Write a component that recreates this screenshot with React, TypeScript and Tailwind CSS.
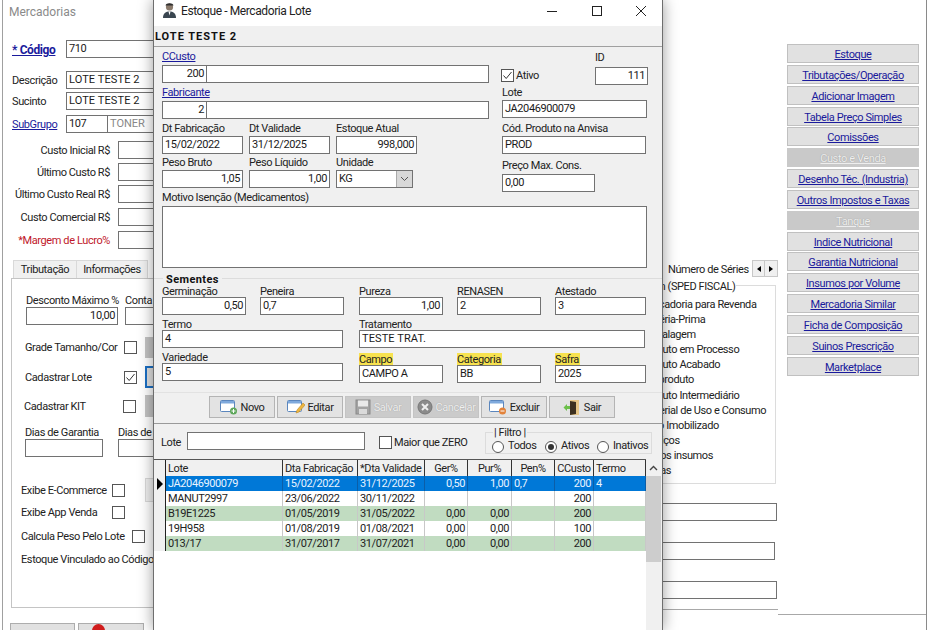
import type { ReactNode } from 'react';

const inputBox = 'h-[18px] border border-[#727272] bg-white px-[2px] leading-[15px] text-[#1a1a1a] overflow-hidden whitespace-nowrap';

function Input({ className = '', right, children }: { className?: string; right?: boolean; children?: ReactNode }) {
  return <div className={`${inputBox} ${right ? 'text-right' : ''} ${className}`}>{children}</div>;
}

function Label({ className = '', children }: { className?: string; children: ReactNode }) {
  return <div className={`h-[14px] leading-[16px] whitespace-nowrap text-[#222] ${className}`}>{children}</div>;
}

function LinkLabel({ className = '', children }: { className?: string; children: ReactNode }) {
  return <div className={`h-[14px] leading-[16px] whitespace-nowrap text-[#1a1a9c] underline ${className}`}>{children}</div>;
}

function Check({ checked, className = '' }: { checked?: boolean; className?: string }) {
  return (
    <div className={`w-[13px] h-[13px] shrink-0 border border-[#555] bg-white flex items-center justify-center ${className}`}>
      {checked && (
        <svg width="11" height="11" viewBox="0 0 11 11" fill="none" stroke="#333" strokeWidth="1">
          <path d="M1.5 5.5 L4.2 8.5 L9.5 2" />
        </svg>
      )}
    </div>
  );
}

function Radio({ checked }: { checked?: boolean }) {
  return (
    <div className="w-[12px] h-[12px] shrink-0 rounded-full border border-[#555] bg-white flex items-center justify-center">
      {checked && <div className="w-[6px] h-[6px] rounded-full bg-[#333]" />}
    </div>
  );
}

function WindowIcon({ badge }: { badge: ReactNode }) {
  return (
    <svg width="18" height="16" viewBox="0 0 18 16">
      <rect x="0.5" y="1.5" width="14" height="11" rx="1" fill="#fff" stroke="#5b86bd" />
      <rect x="1" y="2" width="13" height="2.5" fill="#7fa9dc" />
      {badge}
    </svg>
  );
}

const toolbar = [
  {
    name: 'Novo',
    icon: <WindowIcon badge={<><circle cx="13.5" cy="12" r="3.5" fill="#5da75a" /><path d="M11.5 12h4M13.5 10v4" stroke="#fff" /></>} />,
  },
  {
    name: 'Editar',
    icon: <WindowIcon badge={<><path d="M9 14l1-3 6-7 2 2-6 7z" fill="#eeb640" stroke="#b98a2a" strokeWidth="0.6" /></>} />,
  },
  {
    name: 'Salvar',
    disabled: true,
    icon: (
      <svg width="16" height="16" viewBox="0 0 16 16">
        <rect x="1" y="1" width="14" height="14" fill="#a3a3a3" stroke="#8a8a8a" />
        <rect x="3" y="1.5" width="10" height="6" fill="#e9e9e9" />
        <rect x="4" y="10" width="8" height="5" fill="#dadada" />
      </svg>
    ),
  },
  {
    name: 'Cancelar',
    disabled: true,
    icon: (
      <svg width="16" height="16" viewBox="0 0 16 16">
        <circle cx="8" cy="8" r="7" fill="#8b8b8b" stroke="#777" />
        <path d="M5 5l6 6M11 5l-6 6" stroke="#eee" strokeWidth="2" />
      </svg>
    ),
  },
  {
    name: 'Excluir',
    icon: <WindowIcon badge={<><circle cx="13.5" cy="12" r="3.5" fill="#e2823a" /><path d="M11.5 12h4" stroke="#fff" /></>} />,
  },
  {
    name: 'Sair',
    icon: (
      <svg width="18" height="17" viewBox="0 0 18 17">
        <rect x="7" y="1" width="9" height="15" fill="#e6c689" />
        <path d="M7 2l6 1v12l-6 1z" fill="#3d3020" />
        <path d="M0.5 8.5l3.5-3.5v2h3v3H4v2z" fill="#6cc04a" />
      </svg>
    ),
  },
];

const gridCols = 'grid grid-cols-[117px_75px_67px_43px_44px_43px_39px_52px]';
const headers = ['Lote', 'Dta Fabricação', '*Dta Validade', 'Ger%', 'Pur%', 'Pen%', 'CCusto', 'Termo'];
const centeredHeaders = [3, 4, 5, 6];
const rightCols = [3, 4, 6];
const rows = [
  { cells: ['JA2046900079', '15/02/2022', '31/12/2025', '0,50', '1,00', '0,7', '200', '4'], kind: 'sel' },
  { cells: ['MANUT2997', '23/06/2022', '30/11/2022', '', '', '', '200', ''], kind: 'plain' },
  { cells: ['B19E1225', '01/05/2019', '31/05/2022', '0,00', '0,00', '', '200', ''], kind: 'green' },
  { cells: ['19H958', '01/08/2019', '01/08/2021', '0,00', '0,00', '', '100', ''], kind: 'plain' },
  { cells: ['013/17', '31/07/2017', '31/07/2021', '0,00', '0,00', '', '200', ''], kind: 'green' },
];

const sideButtons = [
  ['Estoque'],
  ['Tributações/Operação'],
  ['Adicionar Imagem'],
  ['Tabela Preço Simples'],
  ['Comissões '],
  ['Custo e Venda', 'off'],
  ['Desenho Téc. (Industria)'],
  ['Outros Impostos e Taxas'],
  ['Tanque', 'off'],
  ['Indice Nutricional'],
  ['Garantia Nutricional'],
  ['Insumos por Volume'],
  ['Mercadoria Similar'],
  ['Ficha de Composição'],
  ['Suinos Prescrição'],
  ['Marketplace'],
];

const spedItems = [
  'Mercadoria para Revenda',
  'Matéria-Prima',
  'Embalagem',
  'Produto em Processo',
  'Produto Acabado',
  'Subproduto',
  'Produto Intermediário',
  'Material de Uso e Consumo',
  'Ativo Imobilizado',
  'Serviços',
  'Outros insumos',
  'Outras',
];

function CostRow({ label, red, top }: { label: string; red?: boolean; top: string }) {
  return (
    <div className={`flex items-center h-[18px] ${top}`}>
      <div className={`w-[107px] shrink-0 pt-[2px] text-right whitespace-nowrap ${red ? 'text-[#c0182a]' : 'text-[#222]'}`}>{label}</div>
      <Input className="ml-[8px] w-[60px] shrink-0" />
    </div>
  );
}

function BackLeft() {
  return (
    <div className="w-[150px] ml-[2px] h-[630px] box-content border-l border-[#a0a0a0] overflow-hidden shrink-0">
      <div className="pt-[5px] pl-[6px] h-[14px] leading-[14px] box-content text-[12px] tracking-[0px] text-[#8a8a8a]">Mercadorias</div>
      <div className="flex items-center h-[18px] mt-[21px] ml-[9px]">
        <div className="w-[54px] shrink-0 pt-[2px] font-bold text-[12px] text-[#1a1a9c] underline whitespace-nowrap">* Código</div>
        <Input className="w-[90px] shrink-0">710</Input>
      </div>
      <div className="flex items-center h-[18px] mt-[13px] ml-[9px]">
        <div className="w-[54px] shrink-0 pt-[2px]">Descrição</div>
        <Input className="w-[90px] shrink-0 tracking-[0.1px]">LOTE TESTE 2</Input>
      </div>
      <div className="flex items-center h-[18px] mt-[3px] ml-[9px]">
        <div className="w-[54px] shrink-0 pt-[2px]">Sucinto</div>
        <Input className="w-[90px] shrink-0 tracking-[0.1px]">LOTE TESTE 2</Input>
      </div>
      <div className="flex items-center h-[18px] mt-[5px] ml-[9px]">
        <div className="w-[54px] shrink-0 pt-[2px] text-[#1a1a9c] underline">SubGrupo</div>
        <Input className="w-[42px] shrink-0">107</Input>
        <Input className="w-[60px] shrink-0 text-[#888] -ml-px tracking-[0px]">TONER</Input>
      </div>
      <CostRow label="Custo Inicial R$" top="mt-[8px]" />
      <CostRow label="Último Custo R$" top="mt-[4px]" />
      <CostRow label="Último Custo Real R$" top="mt-[4px]" />
      <CostRow label="Custo Comercial R$" top="mt-[5px]" />
      <CostRow label="*Margem de Lucro%" red top="mt-[5px]" />
      <div className="flex mt-[11px] ml-[10px] h-[18px]">
        <div className="w-[64px] border border-b-0 border-[#d9d9d9] bg-[#f0f0f0] text-center leading-[18px]">Tributação</div>
        <div className="w-[71px] border border-b-0 border-l-0 border-[#d9d9d9] bg-[#f0f0f0] text-center leading-[18px]">Informações</div>
      </div>
      <div className="ml-[8px] w-[160px] h-[330px] border-l border-t border-b border-[#c4c4c4]">
        <div className="flex mt-[14px] ml-[14px]">
          <Label className="w-[99px] shrink-0">Desconto Máximo %</Label>
          <Label>Conta</Label>
        </div>
        <div className="flex ml-[14px]">
          <Input right className="w-[92px] shrink-0">10,00</Input>
          <Input className="w-[40px] shrink-0 ml-[7px]" />
        </div>
        <div className="h-[22px] mt-[11px] ml-[13px] flex items-center">
          <div className="w-[99px] shrink-0 pt-[2px] whitespace-nowrap">Grade Tamanho/Cor</div>
          <Check />
          <div className="ml-[8px] w-[12px] h-[21px] bg-[#c4c4c4]" />
        </div>
        <div className="h-[22px] mt-[8px] ml-[13px] flex items-center">
          <div className="w-[99px] shrink-0 pt-[2px] whitespace-nowrap">Cadastrar Lote</div>
          <Check checked />
          <div className="ml-[8px] w-[12px] h-[22px] border-2 border-[#1a6fc4] bg-[#e1e1e1]" />
        </div>
        <div className="h-[22px] mt-[7px] ml-[12px] flex items-center">
          <div className="w-[99px] shrink-0 pt-[2px] whitespace-nowrap">Cadastrar KIT</div>
          <Check />
          <div className="ml-[9px] w-[12px] h-[22px] bg-[#c4c4c4]" />
        </div>
        <div className="flex mt-[8px] ml-[13px]">
          <Label className="w-[93px] shrink-0">Dias de Garantia</Label>
          <Label>Dias de</Label>
        </div>
        <div className="flex ml-[13px]">
          <Input className="w-[78px] shrink-0" />
          <Input className="w-[50px] shrink-0 ml-[15px]" />
        </div>
        <div className="h-[24px] mt-[21px] ml-[9px] flex items-center">
          <div className="w-[91px] shrink-0 pt-[2px] whitespace-nowrap">Exibe E-Commerce</div>
          <Check />
          <div className="ml-[20px] w-[20px] h-[24px] border border-[#d9d9d9] bg-[#f0f0f0]" />
        </div>
        <div className="h-[14px] mt-[3px] ml-[9px] flex items-center">
          <div className="w-[91px] shrink-0 pt-[2px] whitespace-nowrap">Exibe App Venda</div>
          <Check />
        </div>
        <div className="h-[14px] mt-[10px] ml-[9px] flex items-center">
          <div className="w-[111px] shrink-0 pt-[2px] whitespace-nowrap">Calcula Peso Pelo Lote</div>
          <Check />
        </div>
        <div className="h-[14px] mt-[9px] ml-[9px] leading-[16px] whitespace-nowrap">Estoque Vinculado ao Código</div>
      </div>
      <div className="flex mt-[15px] ml-[7px] gap-[3px]">
        <div className="w-[65px] h-[20px] shrink-0 border border-[#adadad] bg-[#e1e1e1]" />
        <div className="w-[66px] h-[20px] shrink-0 border border-[#adadad] bg-[#e1e1e1] pl-[13px]">
          <div className="w-[13px] h-[13px] rounded-full bg-[#d01c1c]" />
        </div>
      </div>
    </div>
  );
}

function BackMiddle() {
  return (
    <div className="w-[148px] h-[630px] shrink-0 overflow-hidden">
      <div className="mt-[260px] h-[18px] flex justify-end items-stretch">
        <div className="w-[86px] pl-[3px] text-[#222] leading-[20px] whitespace-nowrap">Número de Séries</div>
        <div className="ml-[1px] w-[13px] h-[17px] border border-[#c8c8c8] bg-[#f0f0f0] flex items-center justify-center">
          <div className="border-y-[3px] border-y-transparent border-r-[4px] border-r-black" />
        </div>
        <div className="w-[13px] h-[17px] border border-l-0 border-[#c8c8c8] bg-[#f0f0f0] flex items-center justify-center">
          <div className="border-y-[3px] border-y-transparent border-l-[4px] border-l-black" />
        </div>
      </div>
      <div className="relative mt-[7px] w-[146px] h-[199px] border border-[#dcdcdc] pt-[11px] pl-[10px]">
        <div className="absolute -top-[7px] left-[0px] bg-white px-[1px] whitespace-nowrap text-[#222]">Origem (SPED FISCAL)</div>
        {spedItems.map((item) => (
          <div key={item} className="h-[15.1px] leading-[15px] whitespace-nowrap text-[#222]">{item}</div>
        ))}
      </div>
      <div className="mt-[19px] w-[147px] h-[18px] border border-[#727272]" />
      <div className="mt-[21px] w-[145px] h-[18px] border border-[#727272]" />
      <div className="mt-[21px] w-[147px] h-[18px] border border-[#727272]" />
      <div className="mt-[10px] border-t border-[#a8a8a8]" />
    </div>
  );
}

function BackRight() {
  return (
    <div className="w-[149px] h-[630px] shrink-0 border-r border-[#8a8a8a]">
      <div className="pt-[44px] pl-[9px] flex flex-col gap-[1.85px]">
        {sideButtons.map(([name, off]) => (
          <div
            key={name}
            className={
              off
                ? 'w-[132px] h-[19px] bg-[#c9c9c9] text-center whitespace-nowrap leading-[21px] text-[#eee] underline [text-shadow:0_0_1px_#8c8c8c]'
                : 'w-[132px] h-[19px] border border-[#c0c0c0] bg-[#e1e1e1] text-center whitespace-nowrap leading-[20px] text-[#1a1a9c] underline'
            }
          >
            {name}
          </div>
        ))}
      </div>
      <div className="mt-[238px] border-t border-[#a8a8a8]" />
    </div>
  );
}

function LoteDialog() {
  return (
    <div className="absolute left-[153px] top-0 w-[510px] h-[630px] border-x border-[#6e6e6e] bg-[#f0f0f0] shadow-[0_0_14px_rgba(0,0,0,0.4)] flex flex-col overflow-hidden">
      {/* title bar */}
      <div className="h-[26px] bg-white flex items-center shrink-0 pb-[5px]">
        <svg className="ml-[8px]" width="15" height="17" viewBox="0 0 15 17">
          <circle cx="7.5" cy="5" r="3.6" fill="#8a7a6c" />
          <path d="M3.5 3.5C4 0.5 11 0.5 11.5 3.5z" fill="#2f2f2f" />
          <path d="M1 16c0-5 3-6.5 6.5-6.5S14 11 14 16z" fill="#3a4650" />
          <path d="M6.5 9.5h2l-1 4z" fill="#fff" />
        </svg>
        <div className="ml-[4px] text-[#222] text-[12px]">Estoque - Mercadoria Lote</div>
        <div className="ml-auto flex items-center">
          <svg width="14" height="14" viewBox="0 0 14 14" stroke="#222" fill="none"><path d="M2 7.5h10" /></svg>
          <svg className="ml-[31px]" width="14" height="14" viewBox="0 0 14 14" stroke="#222" fill="none"><rect x="2.5" y="2.5" width="9" height="9" /></svg>
          <svg className="ml-[30px] mr-[14px]" width="14" height="14" viewBox="0 0 14 14" stroke="#222" fill="none"><path d="M2 2l10 10M12 2L2 12" /></svg>
        </div>
      </div>
      <div className="h-[21px] shrink-0 border-b border-[#a0a0a0] pl-[1px] pt-[3px] font-bold text-[#111] tracking-[1px] leading-[16px]">LOTE TESTE 2</div>

      {/* campos principais */}
      <div className="h-[143px] flex pl-[8px] shrink-0">
        <div className="w-[327px]">
          <LinkLabel className="mt-[2px] mb-[2px]">CCusto</LinkLabel>
          <div className="flex">
            <Input right className="w-[45px]">200</Input>
            <Input className="w-[283px] -ml-px" />
          </div>
          <LinkLabel className="mt-[2px] mb-[2px]">Fabricante</LinkLabel>
          <div className="flex">
            <Input right className="w-[45px]">2</Input>
            <Input className="w-[283px] -ml-px" />
          </div>
          <div className="flex gap-[6px] mt-[2px]">
            <div className="w-[81px]"><Label className="mb-px">Dt Fabricação</Label><Input>15/02/2022</Input></div>
            <div className="w-[81px]"><Label className="mb-px">Dt Validade</Label><Input>31/12/2025</Input></div>
            <div className="w-[81px]"><Label className="mb-px">Estoque Atual</Label><Input right>998,000</Input></div>
          </div>
          <div className="flex gap-[6px] mt-px">
            <div className="w-[81px]"><Label className="mb-px">Peso Bruto</Label><Input right>1,05</Input></div>
            <div className="w-[81px]"><Label className="mb-px">Peso Líquido</Label><Input right>1,00</Input></div>
            <div className="w-[77px]">
              <Label className="mb-px">Unidade</Label>
              <div className="h-[18px] flex border border-[#727272] bg-white pl-[2px] leading-[15px]">
                KG
                <div className="ml-auto w-[16px] bg-[#d8d8d8] border-l border-[#aaa] flex items-center justify-center">
                  <svg width="9" height="6" viewBox="0 0 9 6" fill="none" stroke="#555"><path d="M1 1l3.5 3.5L8 1" /></svg>
                </div>
              </div>
            </div>
          </div>
        </div>
        <div className="ml-[12px] w-[147px]">
          <div className="flex items-end h-[38px]">
            <Check checked className="mb-[3px]" />
            <span className="ml-[2px] mb-[1px]">Ativo</span>
            <div className="ml-auto w-[53px]">
              <Label className="mb-[3px]">ID</Label>
              <Input right>111</Input>
            </div>
          </div>
          <Label className="ml-px">Lote</Label>
          <Input className="ml-px w-[145px] mt-px">JA2046900079</Input>
          <Label className="ml-px mt-[3px] mb-px">Cód. Produto na Anvisa</Label>
          <Input className="ml-px w-[144px]">PROD</Input>
          <Label className="ml-px mt-[4px] mb-[2px]">Preço Max. Cons.</Label>
          <Input className="ml-px w-[93px]">0,00</Input>
        </div>
      </div>

      <Label className="ml-[8px]">Motivo Isenção (Medicamentos)</Label>
      <div className="ml-[8px] mt-[2px] w-[485px] h-[62px] shrink-0 border border-[#727272] bg-white" />

      {/* sementes */}
      <div className="mt-[10px] border-t border-[#dcdcdc]" />
      <div className="-mt-[7px] ml-[9px] w-fit px-[3px] h-[14px] leading-[15px] bg-[#f0f0f0] font-bold text-[#111] tracking-[0.4px]">Sementes</div>
      <div className="-mt-px ml-[8px] grid grid-cols-[98px_99px_98px_98px_91px] leading-[14px]">
        {[
          ['Germinação', '0,50', true],
          ['Peneira', '0,7', false],
          ['Pureza', '1,00', true],
          ['RENASEN', '2', false],
          ['Atestado', '3', false],
        ].map(([label, value, right], i) => (
          <div key={String(label)}>
            <div className="h-[12px] whitespace-nowrap">{label}</div>
            <Input right={Boolean(right)} className={i === 4 ? 'w-[91px]' : 'w-[84px]'}>{value}</Input>
          </div>
        ))}
      </div>
      <div className="mt-[3px] ml-[8px] grid grid-cols-[197px_286px] leading-[14px]">
        <div>
          <div className="h-[12px]">Termo</div>
          <Input className="w-[181px]">4</Input>
        </div>
        <div>
          <div className="h-[12px]">Tratamento</div>
          <Input className="tracking-[0.1px]">TESTE TRAT.</Input>
        </div>
      </div>
      <div className="mt-[3px] ml-[8px] grid grid-cols-[197px_98px_98px_91px] leading-[14px]">
        <div>
          <div className="h-[12px]">Variedade</div>
          <Input className="w-[181px]">5</Input>
        </div>
        {[
          ['Campo', 'CAMPO A', 'w-[84px]'],
          ['Categoria', 'BB', 'w-[84px]'],
          ['Safra', '2025', 'w-[91px]'],
        ].map(([label, value, w]) => (
          <div key={label} className="pt-[2px]">
            <div className="h-[12px] w-fit bg-[#f7e24f] pr-px">{label}</div>
            <Input className={w}>{value}</Input>
          </div>
        ))}
      </div>

      {/* barra de botões */}
      <div className="mt-[9px] h-[32px] shrink-0 border-t border-b border-t-[#e2e2e2] border-b-[#9a9a9a] pt-[3px] pl-[55px] flex gap-[2px]">
        {toolbar.map((b) => (
          <div
            key={b.name}
            className={`w-[66px] h-[22px] flex items-center justify-center gap-[3px] border ${
              b.disabled ? 'border-[#c4c4c4] bg-[#cbcbcb] text-[#efefef] [text-shadow:0_0_1px_#909090]' : 'border-[#b4b4b4] bg-[#e3e3e3] text-[#222]'
            }`}
          >
            {b.icon}
            <span className="pt-[2px]">{b.name}</span>
          </div>
        ))}
      </div>

      {/* filtro */}
      <div className="h-[35px] shrink-0 flex items-start pl-[7px]">
        <div className="mt-[11px] w-[26px] shrink-0">Lote</div>
        <Input className="mt-[8px] w-[178px] shrink-0" />
        <Check className="mt-[12px] ml-[14px]" />
        <div className="mt-[11px] ml-[2px] w-[91px] shrink-0 whitespace-nowrap">Maior que ZERO</div>
        <div className="relative mt-[8px] w-[167px] shrink-0 h-[22px] border border-[#dcdcdc] flex items-center pl-[6px] pt-[7px]">
          <div className="absolute -top-[7px] left-[7px] px-[1px] bg-[#f0f0f0] h-[13px] leading-[13px]">| Filtro |</div>
          <Radio /><span className="ml-[4px] w-[37px] shrink-0">Todos</span>
          <Radio checked /><span className="ml-[4px] w-[36px] shrink-0">Ativos</span>
          <Radio /><span className="ml-[4px]">Inativos</span>
        </div>
      </div>

      {/* grade */}
      <div className="flex flex-1 min-h-0 bg-white">
        <div className="w-[492px] shrink-0">
          <div className="flex h-[17px] border-t border-[#555] bg-[#f0f0f0]">
            <div className="w-[12px] border-r border-[#222]" />
            <div className={gridCols}>
              {headers.map((h, i) => (
                <div key={h} className={`border-r border-[#333] px-[2px] leading-[17px] whitespace-nowrap overflow-hidden text-[#222] ${centeredHeaders.includes(i) ? 'text-center' : ''}`}>{h}</div>
              ))}
            </div>
          </div>
          {rows.map((row, r) => (
            <div key={row.cells[0]} className="flex h-[15px]">
              <div className="w-[12px] border-r border-[#222] bg-[#f0f0f0] flex items-center pl-[3px]">
                {r === 0 && <div className="border-y-[6px] border-y-transparent border-l-[6px] border-l-black" />}
              </div>
              <div
                className={`${gridCols} ${row.kind === 'sel' ? 'bg-[#0078d7] text-[#eaf4ff]' : row.kind === 'green' ? 'bg-[#c1dcc1] text-[#222]' : 'bg-white text-[#222]'}`}
              >
                {row.cells.map((c, i) => (
                  <div
                    key={i}
                    className={`border-r ${row.kind === 'sel' ? 'border-[#0b5ea8]' : 'border-[#c8c8c8]'} px-[2px] leading-[15px] ${rightCols.includes(i) ? 'text-right' : ''}`}
                  >
                    {c}
                  </div>
                ))}
              </div>
            </div>
          ))}
        </div>
        <div className="w-[15px] shrink-0 bg-[#f0f0f0] flex flex-col">
          <div className="h-[17px] flex items-center justify-center">
            <svg width="9" height="6" viewBox="0 0 9 6" fill="none" stroke="#444" strokeWidth="1.4"><path d="M1 5l3.5-3.5L8 5" /></svg>
          </div>
          <div className="h-[86px] bg-[#cdcdcd]" />
        </div>
        <div className="flex-1 bg-[#f0f0f0]" />
      </div>
    </div>
  );
}

export default function App() {
  return (
    <div className="relative w-[941px] h-[630px] bg-white overflow-hidden text-[11px] tracking-[-0.4px] text-[#222] font-['Roboto',sans-serif]">
      <div className="flex">
        <BackLeft />
        <div className="w-[477px] shrink-0" />
        <BackMiddle />
        <BackRight />
      </div>
      <LoteDialog />
    </div>
  );
}
